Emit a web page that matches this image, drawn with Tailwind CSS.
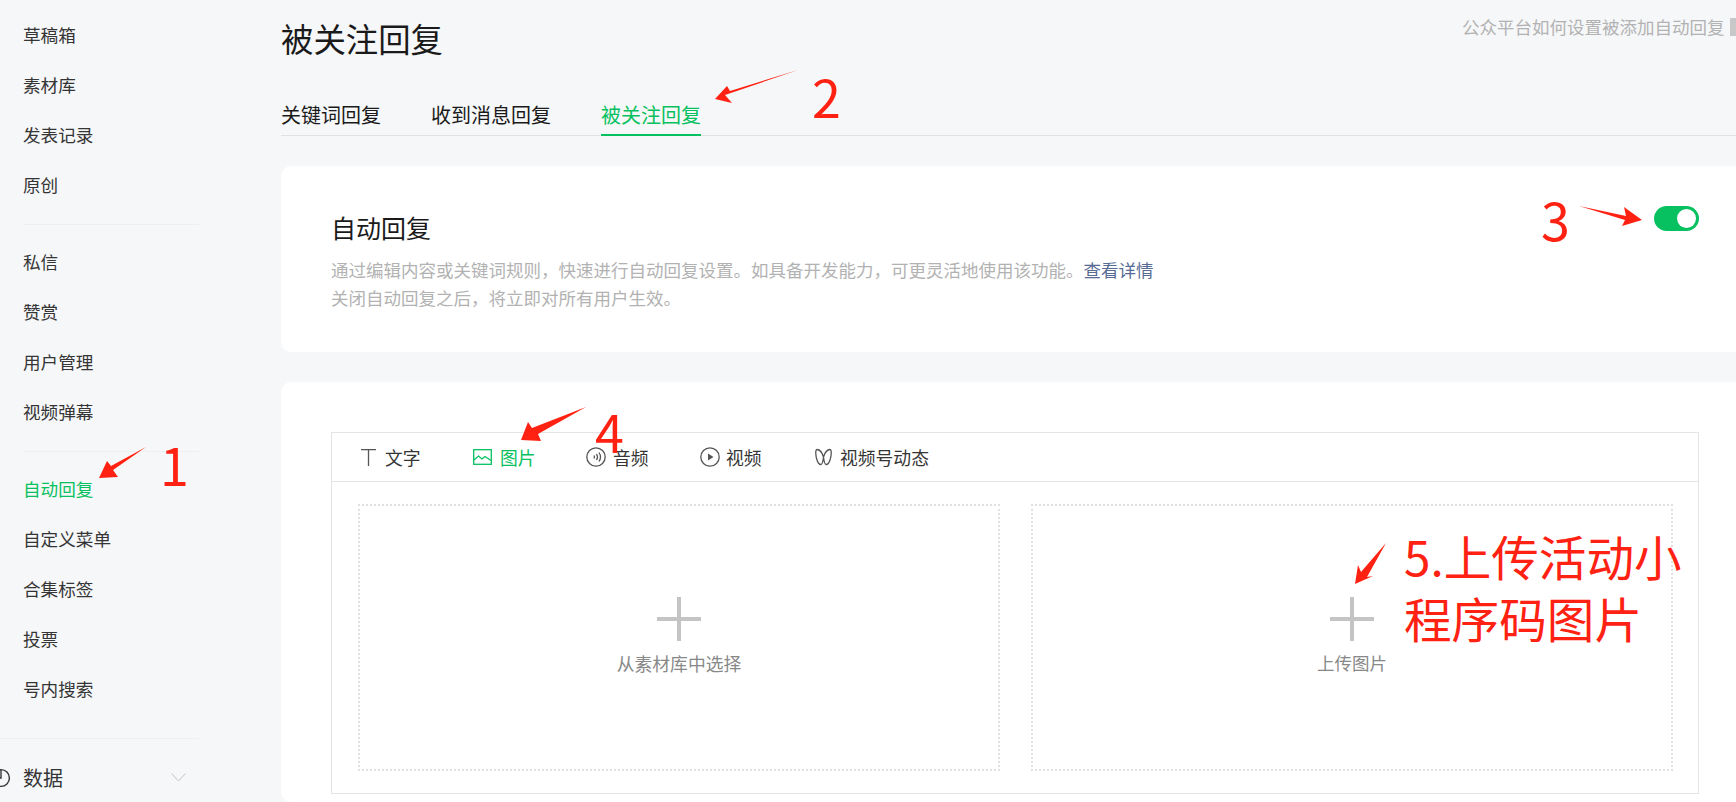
<!DOCTYPE html>
<html lang="zh-CN">
<head>
    <meta charset="UTF-8">
    <meta name="viewport" content="width=device-width, initial-scale=1.0">
    <script src="https://cdn.jsdelivr.net/npm/@tailwindcss/browser@4"></script>
    <title>被关注回复</title>
</head>
<body class="relative h-[802px] overflow-hidden bg-[#f6f7f9] font-['Noto_Sans_CJK_SC',sans-serif] text-[#353535]">
    <div class="flex h-[802px]">
        <!-- Sidebar -->
        <aside class="w-[281px] shrink-0 pt-[10px] text-[17.6px]">
            <ul class="pl-[23px]">
                <li class="flex h-[50px] items-center">草稿箱</li>
                <li class="flex h-[50px] items-center">素材库</li>
                <li class="flex h-[50px] items-center">发表记录</li>
                <li class="flex h-[50px] items-center">原创</li>
            </ul>
            <div class="ml-[23px] mt-[14px] mb-[12px] h-[1px] w-[176px] bg-[#eeeff1]"></div>
            <ul class="pl-[23px]">
                <li class="flex h-[50px] items-center">私信</li>
                <li class="flex h-[50px] items-center">赞赏</li>
                <li class="flex h-[50px] items-center">用户管理</li>
                <li class="flex h-[50px] items-center">视频弹幕</li>
            </ul>
            <div class="ml-[23px] mt-[14px] mb-[12px] h-[1px] w-[176px] bg-[#eeeff1]"></div>
            <ul class="pl-[23px]">
                <li class="flex h-[50px] items-center text-[#07c160]">自动回复</li>
                <li class="flex h-[50px] items-center">自定义菜单</li>
                <li class="flex h-[50px] items-center">合集标签</li>
                <li class="flex h-[50px] items-center">投票</li>
                <li class="flex h-[50px] items-center">号内搜索</li>
            </ul>
            <div class="mt-[24px] h-[1px] w-[199px] bg-[#eeeff1]"></div>
            <div class="relative mt-[14px] flex h-[50px] w-[199px] items-center pl-[23px] text-[20px]">
                <svg class="absolute -left-[8px] top-[15px]" width="19" height="20" viewBox="0 0 19 20" fill="none" stroke="#353535" stroke-width="1.4">
                    <circle cx="9" cy="10" r="8.4"></circle>
                    <path d="M9 2v8H1"></path>
                </svg>
                <span>数据</span>
                <svg class="absolute left-[171px] top-[20px]" width="15" height="9" viewBox="0 0 15 9" fill="none" stroke="#c4c4c4" stroke-width="1">
                    <path d="M0.5 0.5l7 7.5 7-7.5"></path>
                </svg>
            </div>
        </aside>

        <!-- Main -->
        <main class="w-[1455px] shrink-0">
            <div class="relative h-[136px] border-b border-[#e0e1e3]">
                <h1 class="pt-[14px] text-[32.4px] leading-[48px] text-[#1a1a1a]">被关注回复</h1>
                <div class="absolute left-[1181px] top-[14px] flex items-center whitespace-nowrap text-[17.5px] leading-[26px] text-[#b2b2b2]">
                    公众平台如何设置被添加自动回复
                    <span class="ml-[5px] h-[18px] w-[18px] shrink-0 bg-[#c8c8c8]"></span>
                </div>
                <nav class="absolute left-0 top-[95px] flex h-[41px] gap-[50px] text-[20px] text-[#1a1a1a]">
                    <a class="flex h-[41px] items-center pb-[2px]">关键词回复</a>
                    <a class="flex h-[41px] items-center pb-[2px]">收到消息回复</a>
                    <a class="flex h-[41px] items-center border-b-2 border-[#07c160] text-[#07c160]">被关注回复</a>
                </nav>
            </div>

            <!-- Auto reply switch card -->
            <section class="mt-[30px] h-[186px] rounded-l-[10px] bg-white pl-[50px] pt-[40px]">
                <div class="flex w-[1368px] items-start justify-between">
                    <div>
                        <h2 class="mt-[4px] text-[25px] leading-[34px] text-[#1a1a1a]">自动回复</h2>
                        <p class="mt-[12px] whitespace-nowrap text-[17.5px] leading-[28px] text-[#b2b2b2]">通过编辑内容或关键词规则，快速进行自动回复设置。如具备开发能力，可更灵活地使用该功能。<a class="text-[#576b95]">查看详情</a></p>
                        <p class="whitespace-nowrap text-[17.5px] leading-[28px] text-[#b2b2b2]">关闭自动回复之后，将立即对所有用户生效。</p>
                    </div>
                    <div class="flex h-[25px] w-[45px] items-center justify-end rounded-full bg-[#07c160] pr-[3px]">
                        <span class="h-[19px] w-[19px] rounded-full bg-white"></span>
                    </div>
                </div>
            </section>

            <!-- Editor card -->
            <section class="mt-[30px] h-[420px] rounded-l-[10px] bg-white pl-[50px] pt-[50px]">
                <div class="w-[1368px] border border-[#e4e4e4]">
                    <div class="relative h-[49px] border-b border-[#e4e4e4] text-[17.8px] text-[#353535]">
                        <div class="absolute left-[29px] top-0 flex h-[48px] items-center gap-[9px]">
                            <svg width="15" height="18" viewBox="0 0 15 18" fill="none" stroke="#555" stroke-width="1.3"><path d="M0 1.6h15M7.5 1.6V18"></path></svg>
                            <span>文字</span>
                        </div>
                        <div class="absolute left-[141px] top-0 flex h-[48px] items-center gap-[8px] text-[#07c160]">
                            <svg width="19" height="16" viewBox="0 0 19 16" fill="none" stroke="#07c160" stroke-width="1.3"><rect x="0.7" y="0.7" width="17.6" height="14.6"></rect><path d="M1 11l4.5-4 3.5 3 3-2.5 6 4"></path></svg>
                            <span>图片</span>
                        </div>
                        <div class="absolute left-[254px] top-0 flex h-[48px] items-center gap-[7px]">
                            <svg width="20" height="20" viewBox="0 0 20 20" fill="none" stroke="#555" stroke-width="1.3"><circle cx="10" cy="10" r="9.2"></circle><path d="M8 8.5q1 1.5 0 3M10.5 7q2 3 0 6M13 5.5q3 4.5 0 9"></path></svg>
                            <span>音频</span>
                        </div>
                        <div class="absolute left-[368px] top-0 flex h-[48px] items-center gap-[6px]">
                            <svg width="20" height="20" viewBox="0 0 20 20" fill="none" stroke="#555" stroke-width="1.3"><circle cx="10" cy="10" r="9.2"></circle><path d="M8 6.5l5.5 3.5L8 13.500z" fill="#555" stroke="none"></path></svg>
                            <span>视频</span>
                        </div>
                        <div class="absolute left-[483px] top-0 flex h-[48px] items-center gap-[8px]">
                            <svg width="17" height="18" viewBox="0 0 17 18" fill="none" stroke="#555" stroke-width="1.3"><path d="M8.500 9C7 4 4 1.500 2 1.500S0.700 8 2 12c1 3.500 3 4.500 4 4.500S8 13 8.500 9c.5 4 1.500 7.500 2.500 7.500s3-1 4-4.500c1.300-4 2-10.500 0-10.500S10 4 8.500 9z"></path></svg>
                            <span>视频号动态</span>
                        </div>
                    </div>
                    <div class="flex gap-[31px] pl-[26px] pr-[25px] pt-[22px] pb-[22px]">
                        <div class="flex h-[267px] w-[642px] flex-col items-center border-2 border-dotted border-[#e0e0e0] pt-[91px]">
                            <svg width="44" height="44" viewBox="0 0 44 44" fill="#c4c4c4"><rect y="20" width="44" height="4"></rect><rect x="20" width="4" height="44"></rect></svg>
                            <span class="mt-[9px] text-[17.8px] leading-[26px] text-[#888]">从素材库中选择</span>
                        </div>
                        <div class="flex h-[267px] w-[642px] flex-col items-center border-2 border-dotted border-[#e0e0e0] pt-[91px]">
                            <svg width="44" height="44" viewBox="0 0 44 44" fill="#c4c4c4"><rect y="20" width="44" height="4"></rect><rect x="20" width="4" height="44"></rect></svg>
                            <span class="mt-[9px] text-[17.5px] leading-[26px] text-[#888]">上传图片</span>
                        </div>
                    </div>
                </div>
            </section>
        </main>
    </div>

    <!-- Red annotations drawn over the screenshot -->
    <svg class="absolute left-0 top-0" width="1736" height="802" viewBox="0 0 1736 802" fill="#ff2212">
        <path d="M146 447L113 470 118 477 99 478 107 461 111 466z"></path>
        <path d="M798 70L725 95 732 103 715 99 727 86 730 91z"></path>
        <path d="M1579 206L1626 216 1624 207 1642 220 1622 226 1625 220z"></path>
        <path d="M586 407L538 434 541 441 521 440 528 422 532 428z"></path>
        <path d="M1386 543L1367 577 1373 576 1355 584 1358 565 1361 572z"></path>
    </svg>
    <span class="absolute left-[160px] top-[428px] text-[52px] leading-[72px] text-[#ff2212]">1</span>
    <span class="absolute left-[812px] top-[60px] text-[52px] leading-[72px] text-[#ff2212]">2</span>
    <span class="absolute left-[1541px] top-[183px] text-[52px] leading-[72px] text-[#ff2212]">3</span>
    <span class="absolute left-[595px] top-[395px] text-[52px] leading-[72px] text-[#ff2212]">4</span>
    <div class="absolute left-[1404px] top-[525px] w-[300px] text-[47.6px] leading-[62px] text-[#ff2212]">5.上传活动小<br>程序码图片</div>
</body>
</html>
